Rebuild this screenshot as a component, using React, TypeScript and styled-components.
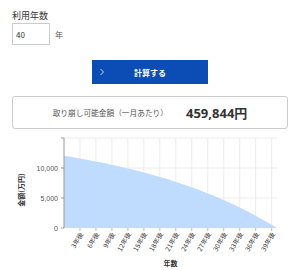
import styled, { createGlobalStyle } from "styled-components";

const GlobalStyle = createGlobalStyle`
  body {
    margin: 0;
    background: #fff;
    color: #333;
    font-family: "Noto Sans CJK JP", "Noto Sans", sans-serif;
  }
`;

const Page = styled.div`
  width: 300px;
  height: 270px;
  overflow: hidden;
  box-sizing: border-box;
  padding: 10px 12px 0;
`;

const FieldLabel = styled.div`
  font-size: 9px;
  line-height: 12px;
  color: #333;
`;

const InputRow = styled.div`
  display: flex;
  align-items: center;
  gap: 5px;
  margin-top: 1px;
`;

const YearsInput = styled.input`
  width: 38px;
  height: 22px;
  box-sizing: border-box;
  border: 1px solid #ccc;
  padding: 0 3px;
  font-size: 8px;
  font-family: inherit;
  color: #333;
  outline: none;
`;

const Unit = styled.span`
  font-size: 8px;
  color: #555;
`;

const CalcButton = styled.button`
  display: grid;
  grid-template-columns: 20px 1fr 20px;
  align-items: center;
  width: 116px;
  height: 24px;
  margin: 15px auto 0;
  padding: 0;
  border: none;
  background: #0b4db4;
  color: #fff;
  font-family: inherit;
  font-size: 8px;
  font-weight: 700;
  cursor: pointer;
`;

const Chevron = styled.svg`
  justify-self: center;
`;

const ResultBox = styled.div`
  display: flex;
  align-items: center;
  justify-content: center;
  gap: 18px;
  height: 33px;
  margin-top: 12px;
  box-sizing: border-box;
  border: 1px solid #ccc;
  border-radius: 3px;
`;

const ResultLabel = styled.span`
  font-size: 7.7px;
  color: #555;
`;

const ResultValue = styled.span`
  font-family: "Noto Sans", "Noto Sans CJK JP", sans-serif;
  font-size: 13px;
  font-weight: 700;
  color: #333;
`;

const ChartSvg = styled.svg`
  display: block;
  margin: 6px -12px 0;
  font-family: "Noto Sans CJK JP", sans-serif;
`;

const X0 = 64;
const X1 = 277;
const TOP = 3;
const BOTTOM = 93;
const YMAX = 15000;
const YEARS = 40;

const xOf = (t: number) => X0 + (t * (X1 - X0)) / YEARS;
const yOf = (v: number) => BOTTOM - (v / YMAX) * (BOTTOM - TOP);

const balance = (t: number) => {
  const r = 0.034;
  const start = 12050;
  return start * (1 - (Math.pow(1 + r, t) - 1) / (Math.pow(1 + r, YEARS) - 1));
};

const Chart = () => {
  const pts: string[] = [];
  for (let t = 0; t <= YEARS; t += 0.5) {
    pts.push(`${xOf(t).toFixed(2)},${yOf(balance(t)).toFixed(2)}`);
  }
  const area = `M${X0},${BOTTOM} L${pts.join(" L")} L${X1},${BOTTOM} Z`;
  const labelYears = Array.from({ length: 13 }, (_, i) => (i + 1) * 3);
  const yTicks = [0, 5000, 10000, 15000];

  return (
    <ChartSvg width={300} height={135} viewBox="0 0 300 135">
      {yTicks.slice(1).map((v) => (
        <line key={v} x1={X0} x2={X1} y1={yOf(v)} y2={yOf(v)} stroke="#ececec" strokeWidth={1} />
      ))}
      {labelYears.map((t) => (
        <line key={t} x1={xOf(t)} x2={xOf(t)} y1={TOP} y2={BOTTOM} stroke="#ececec" strokeWidth={1} />
      ))}
      <path d={area} fill="#bfdcff" />
      <line x1={X0} x2={X0} y1={TOP} y2={BOTTOM} stroke="#999" strokeWidth={1} />
      {yTicks.map((v) => (
        <line key={v} x1={X0 - 3} x2={X0} y1={yOf(v)} y2={yOf(v)} stroke="#999" strokeWidth={1} />
      ))}
      {yTicks.slice(0, 3).map((v) => (
        <text key={v} x={X0 - 6} y={yOf(v) + 2.5} fontSize={7} fill="#555" textAnchor="end" fontFamily="Liberation Sans, sans-serif">
          {v.toLocaleString("en-US")}
        </text>
      ))}
      {labelYears.map((t) => (
        <g key={t}>
          <line x1={xOf(t)} x2={xOf(t)} y1={BOTTOM} y2={BOTTOM + 3} stroke="#bbb" strokeWidth={1} />
          <text
            transform={`translate(${xOf(t) + 1.5},${BOTTOM + 5}) rotate(-60)`}
            fontSize={6.6}
            fill="#444"
            textAnchor="end"
            dy="0.35em"
          >
            {`${t}年後`}
          </text>
        </g>
      ))}
      <text
        transform="translate(24,55) rotate(-90)"
        fontSize={7}
        fontWeight={700}
        fill="#333"
        textAnchor="middle"
      >
        金額(万円)
      </text>
      <text x={170.5} y={131} fontSize={7} fontWeight={700} fill="#333" textAnchor="middle">
        年数
      </text>
    </ChartSvg>
  );
};

export default function App() {
  return (
    <Page>
      <GlobalStyle />
      <FieldLabel>利用年数</FieldLabel>
      <InputRow>
        <YearsInput defaultValue="40" />
        <Unit>年</Unit>
      </InputRow>
      <CalcButton type="button">
        <Chevron width={6} height={8} viewBox="0 0 6 8">
          <polyline points="1.5,1 4.5,4 1.5,7" fill="none" stroke="#c9d8f2" strokeWidth={1} />
        </Chevron>
        <span>計算する</span>
        <span />
      </CalcButton>
      <ResultBox>
        <ResultLabel>取り崩し可能金額（一月あたり）</ResultLabel>
        <ResultValue>459,844円</ResultValue>
      </ResultBox>
      <Chart />
    </Page>
  );
}
